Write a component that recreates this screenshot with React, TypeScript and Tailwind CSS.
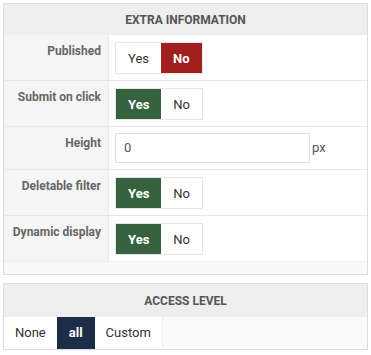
import React from "react";

type Row = {
  label: string;
  kind: "toggle" | "input";
  value?: boolean;
};

const rows: Row[] = [
  { label: "Published", kind: "toggle", value: false },
  { label: "Submit on click", kind: "toggle", value: true },
  { label: "Height", kind: "input" },
  { label: "Deletable filter", kind: "toggle", value: true },
  { label: "Dynamic display", kind: "toggle", value: true },
];

const Toggle = ({ value }: { value: boolean }) => (
  <div className="flex h-[32px] border border-[#e6e6e6] text-[13px] leading-none">
    <span
      className={
        value
          ? "flex items-center px-3 bg-[#36623f] text-white font-bold"
          : "flex items-center px-3 bg-white text-[#333]"
      }
    >
      Yes
    </span>
    <span
      className={
        value
          ? "flex items-center px-3 bg-white text-[#333]"
          : "flex items-center px-3 bg-[#a21f20] text-white font-bold"
      }
    >
      No
    </span>
  </div>
);

export default function App() {
  return (
    <div
      className="p-[3px] bg-white text-[#333] min-h-[355px]"
      style={{ fontFamily: "Roboto, 'Liberation Sans', sans-serif" }}
    >
      {/* extra information */}
      <div className="border border-[#dddddd] bg-[#f9f9f9]">
        <div className="h-[31px] flex items-center justify-center bg-[#eeeeee] text-xs font-bold uppercase text-[#555]">
          Extra information
        </div>
        {rows.map((row, i) => (
          <div
            key={row.label}
            className={
              i < rows.length - 1
                ? "flex border-b border-[#e8e8e8]"
                : "flex"
            }
          >
            <div className="w-[105px] shrink-0 bg-[#f5f5f5] border-r border-[#e8e8e8] pr-[7px] pt-[8px] text-right text-xs font-bold leading-[16px] text-[#666]">
              {row.label}
            </div>
            {row.kind === "toggle" ? (
              <div className="flex-1 bg-white pl-[6px] pt-[7px] pb-[6px] flex">
                <Toggle value={!!row.value} />
              </div>
            ) : (
              <div className="flex-1 bg-white pl-[6px] pt-[6px] pb-[6px] flex items-center">
                <div className="w-[195px] h-[30px] border border-[#dddddd] bg-white flex items-center px-2 text-[13px] text-[#555]">
                  0
                </div>
                <span className="ml-[2px] text-[13px] text-[#555]">px</span>
              </div>
            )}
          </div>
        ))}
        <div className="h-[13px] border-t border-[#eeeeee]" />
      </div>

      {/* access level */}
      <div className="mt-[8px] border border-[#dddddd] bg-[#fafafa]">
        <div className="h-[33px] flex items-center justify-center bg-[#eeeeee] text-xs font-bold uppercase text-[#555]">
          Access level
        </div>
        <div className="flex h-[32px] text-[13px]">
          <span className="flex items-center px-[11px] bg-white text-[#333]">None</span>
          <span className="flex items-center px-[12px] bg-[#1e2d47] text-white font-bold">all</span>
          <span className="flex items-center px-[11px] bg-white text-[#333] border-r border-[#eeeeee]">Custom</span>
        </div>
      </div>
    </div>
  );
}
